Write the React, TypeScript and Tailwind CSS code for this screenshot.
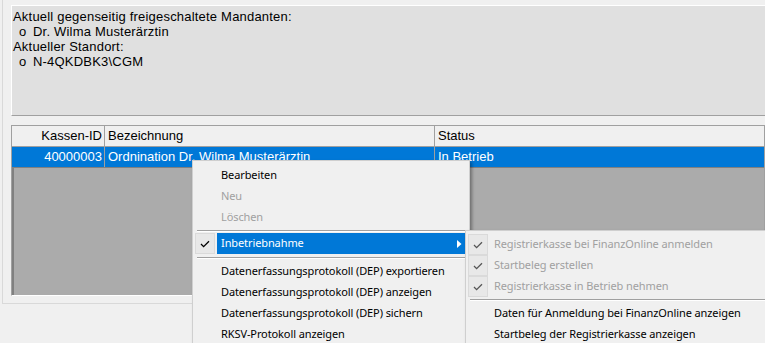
import { ReactNode } from "react";

const Check = ({ className = "" }: { className?: string }) => (
  <svg width="10" height="8" viewBox="0 0 10 8" className={className}>
    <path d="M1 4 L3.6 6.6 L9 1.2" fill="none" stroke="currentColor" strokeWidth="1.3" />
  </svg>
);

type Item = { label: string; disabled?: boolean; checked?: boolean; active?: boolean; sub?: boolean };

const MenuRow = ({ item, checkBox }: { item: Item; checkBox?: boolean }) => (
  <div className="flex h-[21px] items-center">
    <div
      className={`flex h-[21px] w-[20px] items-center justify-center ${
        checkBox && item.checked ? "border border-[#dadada] bg-[#e8e8e8]" : ""
      } ${item.disabled ? "text-[#555]" : "text-black"}`}
    >
      {item.checked && <Check />}
    </div>
    <div
      className={`ml-[2px] flex h-[21px] flex-1 items-center pl-[4px] ${
        item.active ? "bg-[#0078d7] text-white" : item.disabled ? "text-[#a0a0a0]" : "text-black"
      }`}
    >
      <span className="flex-1">{item.label}</span>
      {item.sub && (
        <svg width="5" height="8" viewBox="0 0 5 8" className="mr-[5px]">
          <path d="M0 0 L4.5 4 L0 8 Z" fill="white" />
        </svg>
      )}
    </div>
  </div>
);

const Sep = ({ h = "h-[6px]" }: { h?: string }) => (
  <div className={`flex ${h} items-center pl-[2px]`}>
    <div className="h-[2px] w-full border-t border-b border-t-[#a0a0a0] border-b-white" />
  </div>
);

const Menu = ({ className, children }: { className: string; children: ReactNode }) => (
  <div
    className={`absolute border border-[#cfcfcf] bg-[#f0f0f0] px-[2px] pb-[3px] tracking-[-0.1px] shadow-[2px_2px_3px_rgba(0,0,0,0.35)] ${className}`}
    style={{ fontFamily: '"Noto Sans", sans-serif', fontSize: "11px" }}
  >
    {children}
  </div>
);

export default function App() {
  const mainItems: Item[] = [
    { label: "Bearbeiten" },
    { label: "Neu", disabled: true },
    { label: "Löschen", disabled: true },
  ];
  const depItems: Item[] = [
    { label: "Datenerfassungsprotokoll (DEP) exportieren" },
    { label: "Datenerfassungsprotokoll (DEP) anzeigen" },
    { label: "Datenerfassungsprotokoll (DEP) sichern" },
    { label: "RKSV-Protokoll anzeigen" },
  ];
  const subChecked: Item[] = [
    { label: "Registrierkasse bei FinanzOnline anmelden", disabled: true, checked: true },
    { label: "Startbeleg erstellen", disabled: true, checked: true },
    { label: "Registrierkasse in Betrieb nehmen", disabled: true, checked: true },
  ];
  const subItems: Item[] = [
    { label: "Daten für Anmeldung bei FinanzOnline anzeigen" },
    { label: "Startbeleg der Registrierkasse anzeigen" },
  ];

  return (
    <div
      className="relative h-[343px] w-[765px] overflow-hidden bg-[#f0f0f0] text-[13px] text-black"
      style={{ fontFamily: '"Liberation Sans", Arial, sans-serif' }}
    >
      <div className="ml-[2px] h-[304px] border-b border-l border-[#d9d9d9] pl-[8px] pt-[5px]">
        {/* info box */}
        <div className="h-[111px] border-t border-l border-b border-t-white border-l-white border-b-[#a0a0a0] bg-[#e0e0e0] pl-[1px] pt-[3px] leading-[15px] tracking-[0.2px]">
          <div>Aktuell gegenseitig freigeschaltete Mandanten:</div>
          <div className="flex pl-[6px]">
            <span className="w-[14px]">o</span>
            <span>Dr. Wilma Musterärztin</span>
          </div>
          <div>Aktueller Standort:</div>
          <div className="flex pl-[6px]">
            <span className="w-[14px]">o</span>
            <span>N-4QKDBK3\CGM</span>
          </div>
        </div>

        {/* grid */}
        <div className="mt-[9px] flex h-[171px] flex-col border-t border-l border-r border-b border-t-[#a0a0a0] border-l-[#a0a0a0] border-r-[#a0a0a0] border-b-white bg-[#ababab]">
          <div className="flex h-[21px] border-b border-[#a0a0a0] bg-[#f0f0f0] leading-[20px]">
            <div className="w-[93px] border-r border-[#a0a0a0] pr-[2px] text-right">Kassen-ID</div>
            <div className="w-[330px] border-r border-[#a0a0a0] pl-[3px]">Bezeichnung</div>
            <div className="flex-1 pl-[3px]">Status</div>
          </div>
          <div className="flex h-[21px] border-b border-[#808080] bg-[#0078d7] leading-[20px] text-white">
            <div className="w-[93px] border-r border-[#a0a0a0] pr-[2px] text-right">40000003</div>
            <div className="w-[330px] border-r border-[#a0a0a0] pl-[3px]">Ordnination Dr. Wilma Musterärztin</div>
            <div className="flex-1 pl-[3px]">In Betrieb</div>
          </div>
          <div className="flex-1 border-l-2 border-[#808080]" />
        </div>
      </div>

      {/* context menu */}
      <Menu className="left-[192px] top-[160px] w-[278px] pt-[4px]">
        {mainItems.map((it) => (
          <MenuRow key={it.label} item={it} />
        ))}
        <Sep h="h-[5px]" />
        <MenuRow item={{ label: "Inbetriebnahme", checked: true, active: true, sub: true }} checkBox />
        <Sep h="h-[7px]" />
        {depItems.map((it) => (
          <MenuRow key={it.label} item={it} />
        ))}
      </Menu>

      {/* submenu */}
      <Menu className="left-[465px] top-[230px] w-[320px] pt-[3px]">
        {subChecked.map((it) => (
          <MenuRow key={it.label} item={it} checkBox />
        ))}
        <Sep />
        {subItems.map((it) => (
          <MenuRow key={it.label} item={it} />
        ))}
      </Menu>
    </div>
  );
}
